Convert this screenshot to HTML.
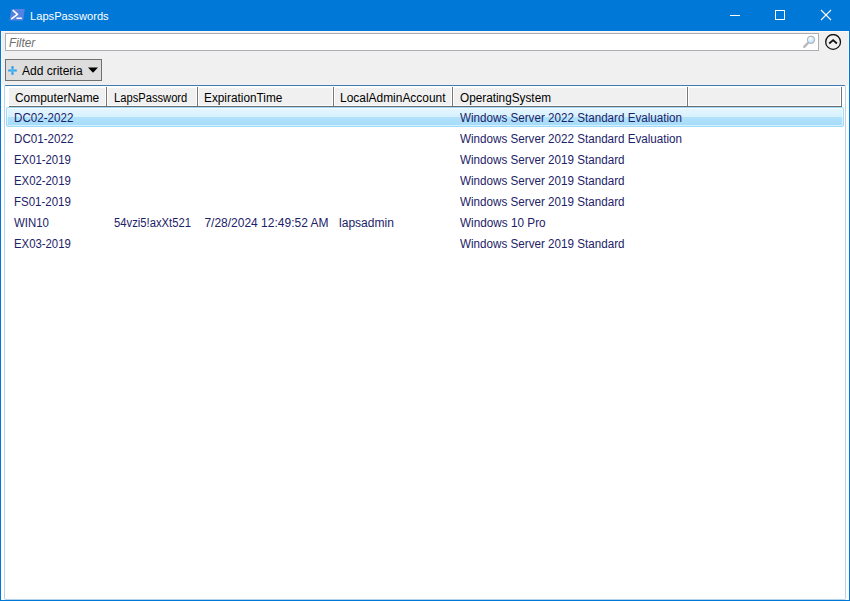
<!DOCTYPE html>
<html><head><meta charset="utf-8"><style>
*{box-sizing:border-box;margin:0;padding:0}
html,body{width:850px;height:601px;overflow:hidden;background:#0078d7}
body{position:relative;font-family:"Liberation Sans",sans-serif;font-size:12px}
.a{position:absolute}
.t{position:absolute;white-space:nowrap;line-height:16px;transform-origin:0 0}
</style></head><body>
<div class="a" style="left:1px;top:31px;width:848px;height:569px;background:#f0f0f0;border-top:1px solid #fbf8f3;border-left:1px solid #fbf8f3;border-right:1px solid #fbf8f3"></div>
<div class="a" style="left:1px;top:85px;width:848px;height:515px;background:#fff"></div>
<svg class="a" style="left:9px;top:9px" width="17" height="13" viewBox="0 0 17 13">
<polygon points="2.6,0 15.8,0 14.2,11.6 0.2,11.6" fill="#5582e0"/>
<polyline points="4.3,1.6 8.5,5.4 2.8,9.7" fill="none" stroke="#fff" stroke-width="1.6" stroke-linecap="round" stroke-linejoin="round"/>
<line x1="8" y1="9.3" x2="12.4" y2="9.3" stroke="#fff" stroke-width="1.5" stroke-linecap="round"/></svg>
<div class="t" style="left:29.99px;top:8px;font-size:11px;color:#fff;transform:scaleX(1.013);">LapsPasswords</div>
<div class="a" style="left:730px;top:15px;width:10px;height:1px;background:#fff"></div>
<div class="a" style="left:775px;top:10px;width:10px;height:10px;border:1px solid #fff"></div>
<svg class="a" style="left:820px;top:9px" width="13" height="13" viewBox="0 0 13 13">
<line x1="1" y1="1" x2="11" y2="11" stroke="#fff" stroke-width="1.1"/>
<line x1="11" y1="1" x2="1" y2="11" stroke="#fff" stroke-width="1.1"/></svg>
<div class="a" style="left:5px;top:33px;width:814px;height:18px;background:#fff;border:1px solid #abadb3"></div>
<div class="t" style="left:9.0px;top:35px;font-size:12px;color:#6d6d6d;font-style:italic;transform:scaleX(0.9815);">Filter</div>
<svg class="a" style="left:802px;top:34px" width="15" height="15" viewBox="0 0 15 15">
<defs><radialGradient id="lens" cx="0.4" cy="0.35" r="0.7"><stop offset="0" stop-color="#f4fbff"/><stop offset="0.6" stop-color="#d2e9fb"/><stop offset="1" stop-color="#9fcdf3"/></radialGradient></defs>
<line x1="2.2" y1="12.8" x2="5.8" y2="9.2" stroke="#b9b9b9" stroke-width="2.4" stroke-linecap="round"/>
<circle cx="9" cy="5.8" r="3.7" fill="url(#lens)" stroke="#a6a8aa" stroke-width="0.9"/></svg>
<svg class="a" style="left:824px;top:34px" width="18" height="17" viewBox="0 0 18 17">
<circle cx="9.1" cy="7.9" r="7.4" fill="none" stroke="#111" stroke-width="1.3"/>
<polyline points="5.2,9.5 9.1,6.1 12.9,9.5" fill="none" stroke="#111" stroke-width="1.8"/></svg>
<div class="a" style="left:5px;top:59px;width:97px;height:22px;background:#dddddd;border:1px solid #707070"></div>
<svg class="a" style="left:8px;top:66px" width="9" height="9" viewBox="0 0 9 9">
<defs><radialGradient id="pl" cx="0.5" cy="0.5" r="0.6"><stop offset="0" stop-color="#4cc0f5"/><stop offset="1" stop-color="#1b86e0"/></radialGradient></defs><path d="M3.4,0.3h2.2v3.1h3.1v2.2h-3.1v3.1h-2.2v-3.1h-3.1v-2.2h3.1z" fill="url(#pl)"/></svg>
<div class="t" style="left:22.0px;top:63px;font-size:12px;color:#000;">Add criteria</div>
<svg class="a" style="left:88px;top:67px" width="10" height="6" viewBox="0 0 10 6"><polygon points="0,0.4 10,0.4 5,5.8" fill="#000"/></svg>
<div class="a" style="left:4px;top:85px;width:842px;height:515px;border:1px solid #b3d3ee;border-top-color:#3d7db3;border-radius:2px"></div>
<div class="a" style="left:9px;top:88px;width:833px;height:19px;background:#f0f0f0;border-bottom:1px solid #6b6b6b"></div>
<div class="a" style="left:9px;top:105px;width:833px;height:1px;background:#fdfdfd"></div>
<div class="a" style="left:105px;top:88px;width:3px;height:18px;background:#fff"></div>
<div class="a" style="left:106px;top:87px;width:1px;height:19px;background:#767676"></div>
<div class="a" style="left:196px;top:88px;width:3px;height:18px;background:#fff"></div>
<div class="a" style="left:197px;top:87px;width:1px;height:19px;background:#767676"></div>
<div class="a" style="left:332px;top:88px;width:3px;height:18px;background:#fff"></div>
<div class="a" style="left:333px;top:87px;width:1px;height:19px;background:#767676"></div>
<div class="a" style="left:451px;top:88px;width:3px;height:18px;background:#fff"></div>
<div class="a" style="left:452px;top:87px;width:1px;height:19px;background:#767676"></div>
<div class="a" style="left:686px;top:88px;width:3px;height:18px;background:#fff"></div>
<div class="a" style="left:687px;top:87px;width:1px;height:19px;background:#767676"></div>
<div class="a" style="left:840px;top:88px;width:3px;height:18px;background:#fff"></div>
<div class="a" style="left:841px;top:87px;width:1px;height:19px;background:#767676"></div>
<div class="t" style="left:15.0px;top:90px;font-size:12px;color:#000;transform:scaleX(0.9941);">ComputerName</div>
<div class="t" style="left:114.07px;top:90px;font-size:12px;color:#000;transform:scaleX(0.9312);">LapsPassword</div>
<div class="t" style="left:204.42px;top:90px;font-size:12px;color:#000;transform:scaleX(0.9848);">ExpirationTime</div>
<div class="t" style="left:340.3px;top:90px;font-size:12px;color:#000;transform:scaleX(0.9952);">LocalAdminAccount</div>
<div class="t" style="left:460.4px;top:90px;font-size:12px;color:#000;transform:scaleX(0.9815);">OperatingSystem</div>
<div class="a" style="left:6px;top:107px;width:838px;height:20px;border:1px solid #9ddbf8;border-radius:2px;box-shadow:inset 0 0 0 1px rgba(255,255,255,0.55);background:linear-gradient(#e6f6fe,#d6f1fd 50%,#b3e2fb 50%,#a4dcfa)"></div>
<div class="t" style="left:13.53px;top:110px;font-size:12px;color:#1c2268;transform:scaleX(0.9667);">DC02-2022</div>
<div class="t" style="left:459.8px;top:110px;font-size:12px;color:#1c2268;transform:scaleX(0.9706);">Windows Server 2022 Standard Evaluation</div>
<div class="t" style="left:13.53px;top:131px;font-size:12px;color:#1c2268;transform:scaleX(0.9667);">DC01-2022</div>
<div class="t" style="left:459.8px;top:131px;font-size:12px;color:#1c2268;transform:scaleX(0.9706);">Windows Server 2022 Standard Evaluation</div>
<div class="t" style="left:13.55px;top:152px;font-size:12px;color:#1c2268;transform:scaleX(0.9458);">EX01-2019</div>
<div class="t" style="left:459.8px;top:152px;font-size:12px;color:#1c2268;transform:scaleX(0.971);">Windows Server 2019 Standard</div>
<div class="t" style="left:13.55px;top:173px;font-size:12px;color:#1c2268;transform:scaleX(0.9458);">EX02-2019</div>
<div class="t" style="left:459.8px;top:173px;font-size:12px;color:#1c2268;transform:scaleX(0.971);">Windows Server 2019 Standard</div>
<div class="t" style="left:13.54px;top:194px;font-size:12px;color:#1c2268;transform:scaleX(0.9569);">FS01-2019</div>
<div class="t" style="left:459.8px;top:194px;font-size:12px;color:#1c2268;transform:scaleX(0.971);">Windows Server 2019 Standard</div>
<div class="t" style="left:13.9px;top:215px;font-size:12px;color:#1c2268;transform:scaleX(0.9514);">WIN10</div>
<div class="t" style="left:113.8px;top:215px;font-size:12px;color:#1c2268;transform:scaleX(0.939);">54vzi5!axXt521</div>
<div class="t" style="left:204.4px;top:215px;font-size:12px;color:#1c2268;">7/28/2024 12:49:52 AM</div>
<div class="t" style="left:339.0px;top:215px;font-size:12px;color:#1c2268;transform:scaleX(1.0038);">lapsadmin</div>
<div class="t" style="left:459.8px;top:215px;font-size:12px;color:#1c2268;transform:scaleX(0.9805);">Windows 10 Pro</div>
<div class="t" style="left:13.55px;top:236px;font-size:12px;color:#1c2268;transform:scaleX(0.9458);">EX03-2019</div>
<div class="t" style="left:459.8px;top:236px;font-size:12px;color:#1c2268;transform:scaleX(0.971);">Windows Server 2019 Standard</div>
</body></html>
